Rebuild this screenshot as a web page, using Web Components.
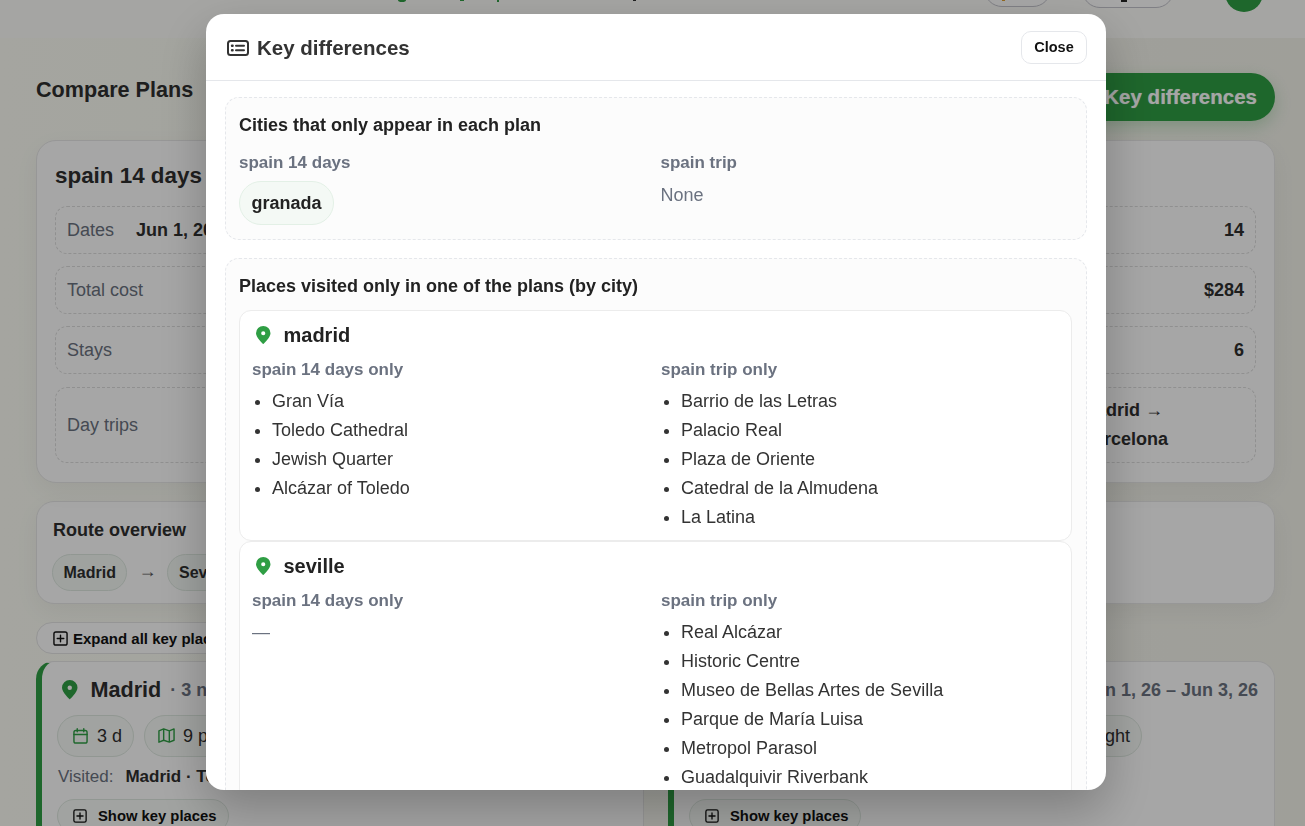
<!DOCTYPE html>
<html lang="en">
<head>
<meta charset="utf-8">
<title>Compare Plans</title>
<style>
    html, body { margin: 0; height: 100%; overflow: hidden; }
    body {
        font-family: "Liberation Sans", Arial, sans-serif;
        color: #222;
        background: linear-gradient(90deg, #fdfef6, #f4f4ec);
    }
</style>
</head>
<body>
<top-bar></top-bar>
<compare-page>
    <plan-card slot="plans" title="spain 14 days">
        <stat-row label="Dates" value="Jun 1, 2026 – Jun 14, 2026" start></stat-row>
        <stat-row label="Total cost" value="$3,980"></stat-row>
        <stat-row label="Stays" value="6"></stat-row>
        <stat-row label="Day trips" value="Madrid → Toledo" tall></stat-row>
    </plan-card>
    <plan-card slot="plans" title="spain trip">
        <stat-row label="Days" value="14"></stat-row>
        <stat-row label="Cost per day" value="$284"></stat-row>
        <stat-row label="Cities" value="6"></stat-row>
        <stat-row label="Route" value="Madrid → Barcelona" narrow></stat-row>
    </plan-card>
    <city-card slot="cities" name="Madrid" nights="· 3 nights" dates="Jun 1, 26 – Jun 3, 26" visited="Madrid · Toledo" third="$120"></city-card>
    <city-card slot="cities" name="Madrid" nights="· 3 nights" dates="Jun 1, 26 – Jun 3, 26" third="$96 / night"></city-card>
</compare-page>
<diff-modal heading="Key differences">
    <diff-section heading="Cities that only appear in each plan">
        <div style="display:grid;grid-template-columns:1fr 1fr;gap:10px;padding-top:2px">
            <plan-column label="spain 14 days"><city-pill>granada</city-pill></plan-column>
            <plan-column label="spain trip"><span style="color:#6b7280;font-size:18px;line-height:29px;display:block">None</span></plan-column>
        </div>
    </diff-section>
    <diff-section heading="Places visited only in one of the plans (by city)">
        <city-diff name="madrid" a="Gran Vía|Toledo Cathedral|Jewish Quarter|Alcázar of Toledo" b="Barrio de las Letras|Palacio Real|Plaza de Oriente|Catedral de la Almudena|La Latina"></city-diff>
        <city-diff name="seville" a="" b="Real Alcázar|Historic Centre|Museo de Bellas Artes de Sevilla|Parque de María Luisa|Metropol Parasol|Guadalquivir Riverbank"></city-diff>
    </diff-section>
</diff-modal>

<script>
// small icon set
const ICONS = {
    pin: '<svg viewBox="0 0 16 20" fill="currentColor"><path fill-rule="evenodd" d="M8 20s8-7.2 8-12A8 8 0 0 0 0 8c0 4.800 8 12 8 12zM8 10.300a2.300 2.300 0 1 1 0-4.600 2.300 2.300 0 0 1 0 4.600z"/></svg>',
    list: '<svg viewBox="0 0 22 16" fill="none" stroke="currentColor" stroke-width="2" stroke-linecap="round"><rect x="1" y="1" width="20" height="14" rx="2.500"/><path d="M9 5.700h8M9 10.300h8"/><path d="M5 5.700h.6M5 10.300h.6" stroke-width="2.400"/></svg>',
    plus: '<svg viewBox="0 0 16 16" fill="none" stroke="currentColor" stroke-width="1.500" stroke-linecap="round"><rect x="1" y="1" width="14" height="14" rx="2"/><path d="M8 4.500v7M4.500 8h7"/></svg>',
    calendar: '<svg viewBox="0 0 16 17" fill="none" stroke="currentColor" stroke-width="1.500" stroke-linecap="round"><rect x="1" y="2.700" width="14" height="13.300" rx="2"/><path d="M1 7h14M4.500 .8v3.200M11.500 .8v3.200"/></svg>',
    map: '<svg viewBox="0 0 18 16" fill="none" stroke="currentColor" stroke-width="1.500" stroke-linejoin="round"><path d="M1 3l5-2 6 2 5-2v12l-5 2-6-2-5 2zM6 1v12M12 3v12"/></svg>'
};

// helper: each element builds its shadow root from a string
function shadow(el, html) {
    el.attachShadow({ mode: 'open' }).innerHTML = html;
}

// the arrow comes from the serif face in the app, thin and 1em wide
function arrows(text) {
    return text.replace('→', '<span class="arrow">→</span>');
}

class AppIcon extends HTMLElement {
    constructor() {
        super();
        const size = this.getAttribute('size') || 16;
        shadow(this, `<style>
            :host { display: inline-flex; width: ${size}px; flex: none; }
            svg { width: 100%; height: auto; display: block; }
        </style>${ICONS[this.getAttribute('name')]}`);
    }
}

class TopBar extends HTMLElement {
    constructor() {
        super();
        shadow(this, `<style>
            :host { display: flex; height: 38px; background: #fefefb; overflow: hidden; position: relative; align-items: flex-end; justify-content: flex-end; padding-right: 42px; box-sizing: border-box; gap: 30px; }
            .bits { position: absolute; left: 0; top: 0; }
            .btn { height: 40px; box-sizing: border-box; border: 1px solid #c4c4cc; border-radius: 18px; margin-bottom: 30px; background: #fff; }
            .a { width: 67px; margin-right: 1px; margin-bottom: 31px; }
            .b { width: 92px; margin-right: 21px; }
            .avatar { width: 38px; height: 38px; border-radius: 50%; background: #2f9e44; margin-bottom: 26px; flex: none; }
        </style>
        <svg class="bits" width="1305" height="4">
            <ellipse cx="402" cy="0" rx="4" ry="2" fill="#2f9e44"/>
            <rect x="460" y="0" width="4" height="1" fill="#2f9e44"/>
            <rect x="497" y="0" width="2" height="2" fill="#2f9e44"/>
            <rect x="633" y="0" width="3" height="1" fill="#333"/>
            <rect x="1002" y="0" width="3" height="1" fill="#e0a030"/>
            <rect x="1121" y="0" width="6" height="2" fill="#222"/>
        </svg>
        <div class="btn a"></div>
        <div class="btn b"></div>
        <div class="avatar"></div>`);
    }
}

class ComparePage extends HTMLElement {
    constructor() {
        super();
        shadow(this, `<style>
            :host { display: block; padding: 35px 30px 0 36px; }
            .head { display: flex; justify-content: space-between; align-items: center; height: 48px; margin-bottom: 19px; }
            h1 { margin: 0 0 14px; font-size: 21.600px; font-weight: 700; color: #2f2f2f; }
            .diff { height: 48px; box-sizing: border-box; border: 0; border-radius: 24px; padding: 0 18px 0 40px; background: #2f9e44; color: #fff; font: 700 20.500px "Liberation Sans", Arial, sans-serif; text-shadow: 0 0 1px rgba(255,255,255,.6); box-shadow: 0 6px 16px rgba(47,158,68,.25); }
            .two { display: grid; grid-template-columns: 608px 607px; gap: 24px; }
            .route { margin-top: 18px; height: 103px; box-sizing: border-box; background: #fff; border: 1px solid #e8e8e8; border-radius: 18px; padding: 16px 15px; box-shadow: 0 8px 24px rgba(0,0,0,.05); }
            .route h2 { margin: 0 0 12px 1px; font-size: 18px; line-height: 24px; color: #2f2f2f; }
            .stops { display: flex; align-items: center; gap: 11px; color: #555; font: 18px "Liberation Serif", serif; }
            .stops .to { margin-bottom: 2px; }
            .stop { height: 37px; box-sizing: border-box; border: 1px solid #dfe9e1; background: #f4f9f5; border-radius: 19px; padding: 0 10.500px; display: flex; align-items: center; font: 700 16px "Liberation Sans", Arial, sans-serif; color: #2f2f2f; }
            .expand { margin: 18px 0 7px; height: 32px; width: max-content; box-sizing: border-box; display: flex; align-items: center; gap: 5px; padding: 0 16px; background: #fff; border: 1px solid #e5e5e5; border-radius: 16px; font-size: 15px; font-weight: 700; color: #111; }
        </style>
        <div class="head"><h1>Compare Plans</h1><button class="diff">Key differences</button></div>
        <div class="two"><slot name="plans"></slot></div>
        <div class="route">
            <h2>Route overview</h2>
            <div class="stops"><span class="stop">Madrid</span><span class="to">→</span><span class="stop">Seville</span></div>
        </div>
        <div class="expand"><app-icon name="plus" size="15"></app-icon>Expand all key places</div>
        <div class="two"><slot name="cities"></slot></div>`);
    }
}

class PlanCard extends HTMLElement {
    constructor() {
        super();
        shadow(this, `<style>
            :host { display: flex; flex-direction: column; gap: 12px; height: 343px; box-sizing: border-box; background: #fff; border: 1px solid #e8e8e8; border-radius: 20px; padding: 18px; box-shadow: 0 8px 24px rgba(0,0,0,.05); }
            h2 { margin: 0 0 1px; font-size: 22.400px; line-height: 34px; font-weight: 700; color: #2f2f2f; }
        </style>
        <h2>${this.getAttribute('title')}</h2><slot></slot>`);
    }
}

class StatRow extends HTMLElement {
    constructor() {
        super();
        const narrow = this.hasAttribute('narrow');
        shadow(this, `<style>
            :host { display: flex; align-items: center; justify-content: space-between; min-height: 48px; box-sizing: border-box; padding: 8px 11px; border: 1px dashed #ddd; border-radius: 12px; background: #fff; font-size: 18px; line-height: 29px; }
            :host([start]) { justify-content: flex-start; gap: 22px; }
            :host([tall]), :host([narrow]) { min-height: 76px; margin-top: 1px; }
            .l { color: #6b7280; }
            .v { font-weight: 700; color: #2f2f2f; ${narrow ? 'width: 163px;' : ''} }
            .arrow { font-family: "Liberation Serif", serif; font-weight: 400; }
        </style>
        <span class="l">${this.getAttribute('label')}</span><span class="v">${arrows(this.getAttribute('value'))}</span>`);
    }
}

class CityCard extends HTMLElement {
    constructor() {
        super();
        const visited = this.getAttribute('visited');
        shadow(this, `<style>
            :host { display: block; height: 300px; box-sizing: border-box; background: #fff; border: 1px solid #e8e8e8; border-left: 6px solid #2f9e44; border-radius: 18px; padding: 16px 16px 0 15px; }
            .title { display: flex; align-items: center; height: 24px; font-size: 18px; font-weight: 700; color: #6b7280; padding-left: 5px; }
            .title app-icon { color: #2f9e44; margin-right: 13px; }
            .title b { font-size: 21.600px; color: #2f2f2f; margin-right: 9px; }
            .dates { margin-left: auto; }
            .chips { display: flex; gap: 10px; margin-top: 13px; }
            .chip { height: 42px; box-sizing: border-box; border: 1px solid #dfe9e1; background: #f7faf7; border-radius: 21px; padding: 0 11px 0 13px; display: flex; align-items: center; gap: 8px; font-size: 18px; color: #2f2f2f; }
            .chip app-icon { color: #2f9e44; }
            .chip.cal { padding-left: 15px; gap: 9px; }
            .chip.wide { width: 238px; justify-content: flex-end; padding-right: 11px; }
            .visited { margin-top: 9px; height: 22px; padding-left: 1px; font-size: 17px; line-height: 22px; color: #6b7280; }
            .visited b { color: #2f2f2f; margin-left: 12px; }
            .show { margin-top: 11px; width: max-content; height: 34px; box-sizing: border-box; display: flex; align-items: center; gap: 11px; padding: 0 12px 0 15px; border: 1px solid #dfe9e1; border-radius: 17px; background: #f7faf7; font-size: 14.800px; font-weight: 700; color: #111; }
        </style>
        <div class="title"><app-icon name="pin" size="15.500"></app-icon><b>${this.getAttribute('name')}</b>${this.getAttribute('nights')}<span class="dates">${this.getAttribute('dates')}</span></div>
        <div class="chips">
            <span class="chip cal"><app-icon name="calendar" size="15"></app-icon>3 d</span>
            <span class="chip"><app-icon name="map" size="17"></app-icon>9 places</span>
            <span class="chip wide">${this.getAttribute('third')}</span>
        </div>
        <div class="visited">${visited ? `Visited:<b>${visited}</b>` : ''}</div>
        <div class="show"><app-icon name="plus" size="14"></app-icon>Show key places</div>`);
    }
}

class DiffModal extends HTMLElement {
    constructor() {
        super();
        shadow(this, `<style>
            :host { position: fixed; inset: 0; display: flex; justify-content: center; align-items: flex-start; padding: 14px 0 0 7px; box-sizing: border-box; background: rgba(0,0,0,.35); backdrop-filter: blur(.6px); }
            .box { width: 900px; height: 776px; background: #fff; border-radius: 18px; display: flex; flex-direction: column; overflow: hidden; box-shadow: 0 20px 50px rgba(0,0,0,.25); }
            header { flex: none; height: 67px; box-sizing: border-box; display: flex; align-items: center; gap: 8px; padding: 2px 19px 0 21px; border-bottom: 1px solid #e5e7eb; }
            h2 { margin: 0; font-size: 20.500px; font-weight: 700; color: #333; flex: 1; }
            button { height: 33px; width: 66px; background: #fff; border: 1px solid #e5e7eb; border-radius: 10px; font: 700 14.500px "Liberation Sans", Arial, sans-serif; color: #111; padding: 0; margin-top: -2px; }
            .body { flex: 1; overflow: hidden; padding: 16px 19px; display: flex; flex-direction: column; gap: 18px; }
            app-icon { color: #333; }
        </style>
        <div class="box">
            <header><app-icon name="list" size="22"></app-icon><h2>${this.getAttribute('heading')}</h2><button>Close</button></header>
            <div class="body"><slot></slot></div>
        </div>`);
    }
}

class DiffSection extends HTMLElement {
    constructor() {
        super();
        shadow(this, `<style>
            :host { display: block; flex: none; box-sizing: border-box; border: 1px dashed #e5e7eb; border-radius: 14px; background: #fcfcfc; padding: 14px 14px 14px 13px; }
            h3 { margin: 0 0 10px; font-size: 18px; line-height: 27px; font-weight: 700; color: #222; }
        </style>
        <h3>${this.getAttribute('heading')}</h3><slot></slot>`);
    }
}

class PlanColumn extends HTMLElement {
    constructor() {
        super();
        shadow(this, `<style>
            :host { display: block; }
            .l { font-size: 17px; line-height: 24px; font-weight: 700; color: #6b7280; margin-bottom: 6px; }
        </style>
        <div class="l">${this.getAttribute('label')}</div><slot></slot>`);
    }
}

class CityPill extends HTMLElement {
    constructor() {
        super();
        shadow(this, `<style>
            :host { display: inline-flex; align-items: center; height: 44px; box-sizing: border-box; padding: 0 11.500px; border: 1px solid #e3f0e6; border-radius: 22px; background: #f4f9f5; font-size: 18px; font-weight: 700; color: #222; }
        </style><slot></slot>`);
    }
}

class CityDiff extends HTMLElement {
    constructor() {
        super();
        const list = (v) => v
            ? `<ul>${v.split('|').map((p) => `<li>${p}</li>`).join('')}</ul>`
            : '<div class="none">—</div>';
        shadow(this, `<style>
            :host { display: block; box-sizing: border-box; background: #fff; border: 1px solid #ececec; border-radius: 12px; padding: 11px 12px 8px; }
            .name { display: flex; align-items: center; gap: 13px; height: 26px; font-size: 20px; font-weight: 700; color: #222; padding-left: 4px; margin-bottom: 10px; }
            .name app-icon { color: #2f9e44; }
            .cols { display: grid; grid-template-columns: 399px 399px; gap: 10px; }
            .l { font-size: 17px; line-height: 24px; font-weight: 700; color: #6b7280; margin-bottom: 5px; }
            ul { margin: 0; padding-left: 20px; font-size: 18px; line-height: 29px; color: #333; }
            .none { font-size: 18px; line-height: 29px; color: #6b7280; }
        </style>
        <div class="name"><app-icon name="pin" size="14.500"></app-icon>${this.getAttribute('name')}</div>
        <div class="cols">
            <div><div class="l">spain 14 days only</div>${list(this.getAttribute('a'))}</div>
            <div><div class="l">spain trip only</div>${list(this.getAttribute('b'))}</div>
        </div>`);
    }
}

customElements.define('app-icon', AppIcon);
customElements.define('top-bar', TopBar);
customElements.define('compare-page', ComparePage);
customElements.define('plan-card', PlanCard);
customElements.define('stat-row', StatRow);
customElements.define('city-card', CityCard);
customElements.define('diff-modal', DiffModal);
customElements.define('diff-section', DiffSection);
customElements.define('plan-column', PlanColumn);
customElements.define('city-pill', CityPill);
customElements.define('city-diff', CityDiff);
</script>
</body>
</html>
